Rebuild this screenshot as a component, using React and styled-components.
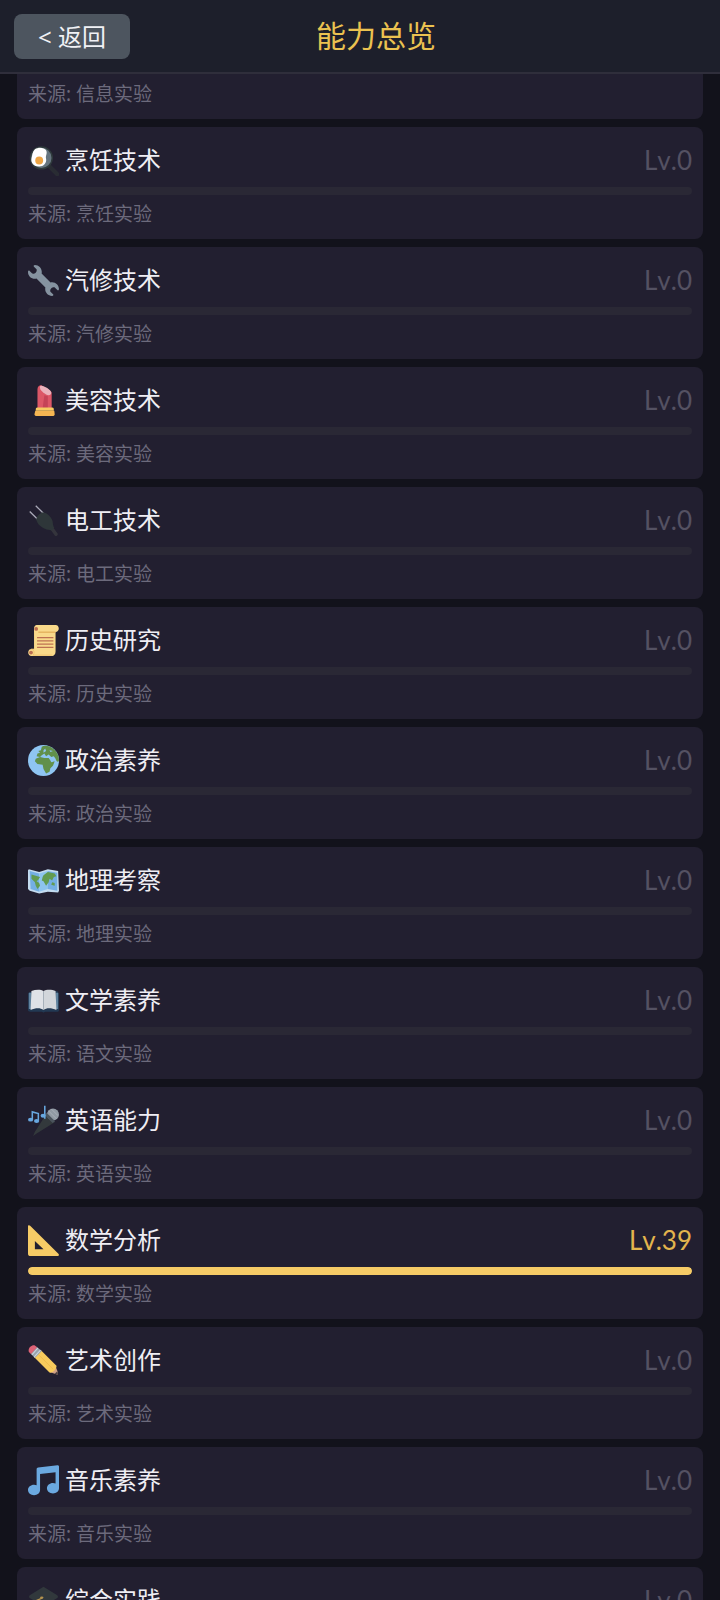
import styled, { createGlobalStyle } from 'styled-components';

const Global = createGlobalStyle`
    * {
        box-sizing:border-box;
    }
    body {
        margin:0;
        background:#12121b;
        font-family:'Noto Sans', 'Noto Sans CJK SC', sans-serif;
    }
`;

const Page = styled.div`
    height:100vh;
    display:flex;
    flex-direction:column;
    overflow:hidden;
`;

const Header = styled.header`
    flex:none;
    display:flex;
    align-items:center;
    padding:14px 98px 13px 14px;
    background:#1d1f2b;
    border-bottom:2px solid #2f2e3b;
`;

const BackBtn = styled.button`
    width:116px;
    height:45px;
    padding:0;
    border:0;
    border-radius:8px;
    background:#4d555f;
    color:#f0f1f5;
    font-family:inherit;
    font-size:24px;
    line-height:45px;
    cursor:pointer;
`;

const Title = styled.h1`
    flex:1;
    margin:0;
    padding-bottom:2px;
    text-align:center;
    font-size:30px;
    font-weight:400;
    line-height:43px;
    color:#ebc250;
`;

const List = styled.ul`
    flex:1;
    min-height:0;
    margin:0;
    padding:0 17px;
    list-style:none;
    display:flex;
    flex-direction:column;
    gap:8px;
    overflow:hidden;
`;

const Card = styled.li`
    flex:none;
    padding:${(props) => (props.$cut ? '7px 11px 12px' : '14px 11px 12px')};
    border-radius:${(props) => (props.$cut ? '0 0 8px 8px' : '8px')};
    background:#221f30;
`;

const Row = styled.div`
    display:flex;
    align-items:center;
    gap:6px;
    height:38px;
    margin-bottom:8px;
`;

const Icon = styled.svg`
    width:31px;
    height:31px;
    flex:none;
`;

const Name = styled.h2`
    flex:1;
    margin:0;
    font-size:24px;
    font-weight:400;
    line-height:38px;
    color:#efeef4;
`;

const Level = styled.span`
    font-family:Lato, sans-serif;
    font-size:26px;
    font-kerning:none;
    line-height:36px;
    color:${(props) => (props.$active ? '#e3b54d' : '#545162')};
`;

const Track = styled.div`
    height:8px;
    margin-bottom:6px;
    border-radius:4px;
    background:#2a2835;
    overflow:hidden;
`;

const Fill = styled.div`
    height:100%;
    border-radius:4px;
    background:#f6cb66;
`;

const Source = styled.p`
    margin:0;
    font-size:19px;
    line-height:26px;
    color:#6c6a7c;
`;

const icons = {
    pan: (
        <>
            <path d="M25 25l9 9" stroke="#292c33" strokeWidth="5" strokeLinecap="round" />
            <circle cx="15.5" cy="15" r="13.5" fill="#2f3a3c" />
            <circle cx="15.5" cy="15" r="11.8" fill="#66757f" />
            <path d="M8 5c4-3 11-2 13 1 2 4-1 6 0 10 1 5-3 9-8 9-6 0-10-4-9-9 1-4 1-8 4-11z" fill="#fff" />
            <circle cx="13" cy="18" r="4.6" fill="#eda545" />
        </>
    ),
    wrench: (
        <path fill="#8593a0" d="M27.989 19.977c-.622 0-1.225.078-1.806.213L15.811 9.818c.134-.581.212-1.184.212-1.806C16.023 3.587 12.436 0 8.012 0 7.11 0 5.91.916 6.909 1.915l2.997 2.997s.999 1.998-.999 3.995-3.996.998-3.996.998L1.915 6.908C.916 5.909 0 7.105 0 8.012c0 4.425 3.587 8.012 8.012 8.012.622 0 1.225-.078 1.806-.212l10.371 10.371c-.135.581-.213 1.184-.213 1.806 0 4.425 3.588 8.011 8.012 8.011.901 0 2.101-.916 1.102-1.915l-2.997-2.997s-.999-1.998.999-3.995 3.995-.999 3.995-.999l2.997 2.997c1 .999 1.916-.197 1.916-1.104 0-4.425-3.588-8.01-8.011-8.01z" />
    ),
    lipstick: (
        <>
            <path d="M11 5c0-4 3-5 5-4.500L25 6c2 1 2.500 2 2.500 4v17H11z" fill="#dc5767" />
            <path d="M19 12l4 1v14h-6z" fill="#c54357" />
            <path d="M14.500 1c3-1 12 4 12.500 8 0 3-3 3.500-6 2-4-2-9-7-6.500-10z" fill="#eab2bc" />
            <path d="M11 26h17c2 0 2 1 2 4H9c0-3 0-4 2-4z" fill="#f7cb63" />
            <path d="M8.500 30h22l.5 4c0 1.500-1 2-2 2H10c-1.500 0-2.500-.5-2.500-2z" fill="#f5b552" />
        </>
    ),
    plug: (
        <>
            <path d="M2 7.500l10 10M9 .8l10 10" stroke="#aaaab8" strokeWidth="1.500" />
            <path d="M26 25l6.500 9" stroke="#34343c" strokeWidth="4" strokeLinecap="round" />
            <path d="M9.500 16.500c1-4 4-7 8-8 5 1 9 5 11 10 .5 3 .5 6 2 8l-3 3c-3-1-5-.5-8-2-5-2-9-6-10-11z" fill="#2e3639" />
        </>
    ),
    scroll: (
        <>
            <path d="M7 8V4c0-5 5-4 5-4h20c5 0 5 8 0 8v23c0 3-2 5-4 5H4c-5 0-5-8 0-8h3z" fill="#f9d98a" />
            <path d="M12 8.300h20" stroke="#dda54f" strokeWidth="1.200" />
            <path d="M7 28h-3c3 1 4 4 2 7h22" stroke="#eebf6c" strokeWidth="1" />
            <circle cx="9.500" cy="4.500" r="2.200" fill="#ba6e51" />
            <circle cx="3.500" cy="32" r="2.200" fill="#ba6e51" />
            <path d="M10.500 14.700h19M10.500 18.500h19M10.500 22.300h19M10.500 26h19" stroke="#bd7152" strokeWidth="1.500" />
        </>
    ),
    globe: (
        <>
            <circle cx="18" cy="18" r="18" fill="#8fc5f2" />
            <path fill="#61904a" d="M16 2c3-2 10-1 14 3 4 3 6 8 6 13-1 3-3 1-4-2l-2-3-3 1-3-3-3 2-2-3-3 2-2 2-4-1 1-3 3-1-2-2 3-1z" />
            <path fill="#61904a" d="M9 16l5-2 5 1 5 0 2 3 1 2 4-1-2 5-3 3-1 4-4 2-3-5-1-5-6-1-3-3z" />
            <path fill="#8fc5f2" d="M18 6l2-2 1 3-3 2zM25 6l4 1-3 1zM26 15l3 4-1 1z" />
        </>
    ),
    map: (
        <>
            <path d="M1 5l12 3 10-3 12 2 1 23-1 2-12-1-10 2-11-3-2-2V6z" fill="#c3dbef" strokeLinejoin="round" />
            <path d="M2 7l11 3v21L3 28z" fill="#74afe3" />
            <path d="M13 10l10-3v21l-10 3z" fill="#8dc4ee" />
            <path d="M23 7l11 2v21l-11-2z" fill="#74afe3" />
            <path fill="#629b50" d="M4 11l7 2 3 1-2 3-2 2 3 2 1 3-3 4-2-4-1-4-4-4zM18 12l5-4 8 2 2 3-3 1-2 4-3-2-1 4-3 4-3-5-2-1 1-4zM28 20l3 1v3l-4-1z" />
        </>
    ),
    book: (
        <>
            <path d="M2 8l32-1 2 3v19c0 2-1 2-3 2H20l-2 1-2-1H3c-2 0-3-1-3-2V10z" fill="#223953" />
            <path d="M1 9h3v19H1zM32 9h3v19h-3z" fill="#60829e" />
            <path d="M4 7c5-2 11-2 14 0v22c-4-3-10-2-15 0z" fill="#dfe2e7" />
            <path d="M18 7c3-2 10-2 14 0l1 22c-5-2-11-3-15 0z" fill="#d2d6db" />
            <path d="M18 7v22" stroke="#a5afb9" strokeWidth=".8" />
        </>
    ),
    mic: (
        <>
            <path d="M21 11l10 9L10 33l-4 3 2-5z" fill="#33393c" />
            <circle cx="29" cy="11" r="7" fill="#919aa4" />
            <path d="M21.500 9l10 10-3 2-9-9z" fill="#4b545d" />
            <path d="M24 7l9 9M27 4.500l8 8" stroke="#b7bdc4" strokeWidth=".7" />
            <path d="M5 17V8l7 2v8M19.500 1v15" stroke="#68a7df" strokeWidth="1.800" fill="none" />
            <ellipse cx="3" cy="17" rx="3" ry="2.300" fill="#68a7df" />
            <ellipse cx="10" cy="18.500" rx="3" ry="2.300" fill="#68a7df" />
            <ellipse cx="17.500" cy="12.500" rx="2.900" ry="2.300" fill="#68a7df" />
        </>
    ),
    ruler: (
        <path fill="#f6cb66" fillRule="evenodd" d="M0 1.500C0 .3 1.500 0 2.500 1L35.300 33.500C36.500 34.800 35.800 36 34 36H3c-2 0-3-1-3-3zM8 18.500v9.700h10z" />
    ),
    pencil: (
        <>
            <path d="M34.500 34.500L24 31l7.500-7.500 3 7.500z" fill="#d3a283" />
            <path d="M35 34.500l-4-1 3-3z" fill="#4b4144" />
            <path d="M7 14l8-8 18 18c1 3-5 9-8 8z" fill="#f7cb5c" />
            <path d="M11 10l18 18" stroke="#eeb94b" strokeWidth="1" />
            <path d="M3 10l7-8 6 5-8 8z" fill="#98a3ae" />
            <path d="M4.500 11.500l7-8M7 14l7.500-8" stroke="#ced6de" strokeWidth="1.200" />
            <path d="M1 8C-.5 4 4-.5 8 .5l2.500 2-7 8z" fill="#dd6276" />
        </>
    ),
    note: (
        <path fill="#6ba9e0" d="M34.209.206L11.791 2.793C10.806 2.907 10 3.811 10 4.803v18.782C9.09 23.214 8.075 23 7 23c-3.865 0-7 2.685-7 6 0 3.314 3.135 6 7 6s7-2.686 7-6V10.539l18-2.077v13.124c-.91-.372-1.925-.586-3-.586-3.865 0-7 2.685-7 6 0 3.314 3.135 6 7 6s7-2.686 7-6V1.803c0-.992-.806-1.71-1.791-1.597z" />
    ),
    cap: (
        <>
            <path d="M6 16h24v12c-4 5-20 5-24 0z" fill="#292f33" />
            <path d="M18 2l16 10c1 1 1 2 0 3L18 25 2 15c-1-1-1-2 0-3z" fill="#31383c" />
            <path d="M17 15L5 20v9" stroke="#b4934f" strokeWidth="1.500" fill="none" />
            <ellipse cx="16" cy="14.500" rx="2" ry="1.200" fill="#b4934f" />
        </>
    ),
};

const abilities = [
    { icon: 'pan', name: '烹饪技术', source: '烹饪实验', level: 0, progress: 0 },
    { icon: 'wrench', name: '汽修技术', source: '汽修实验', level: 0, progress: 0 },
    { icon: 'lipstick', name: '美容技术', source: '美容实验', level: 0, progress: 0 },
    { icon: 'plug', name: '电工技术', source: '电工实验', level: 0, progress: 0 },
    { icon: 'scroll', name: '历史研究', source: '历史实验', level: 0, progress: 0 },
    { icon: 'globe', name: '政治素养', source: '政治实验', level: 0, progress: 0 },
    { icon: 'map', name: '地理考察', source: '地理实验', level: 0, progress: 0 },
    { icon: 'book', name: '文学素养', source: '语文实验', level: 0, progress: 0 },
    { icon: 'mic', name: '英语能力', source: '英语实验', level: 0, progress: 0 },
    { icon: 'ruler', name: '数学分析', source: '数学实验', level: 39, progress: 100 },
    { icon: 'pencil', name: '艺术创作', source: '艺术实验', level: 0, progress: 0 },
    { icon: 'note', name: '音乐素养', source: '音乐实验', level: 0, progress: 0 },
    { icon: 'cap', name: '综合实践', level: 0, progress: 0 },
];

const AbilityCard = ({ icon, name, source, level, progress }) => (
    <Card>
        <Row>
            <Icon viewBox="0 0 36 36" fill="none" aria-hidden="true">{icons[icon]}</Icon>
            <Name>{name}</Name>
            <Level $active={level > 0}>Lv.{level}</Level>
        </Row>
        <Track role="progressbar" aria-label={name} aria-valuenow={progress}>
            <Fill style={{ width: `${progress}%` }} />
        </Track>
        {source && <Source>来源: {source}</Source>}
    </Card>
);

const App = () => (
    <Page>
        <Global />
        <Header>
            <BackBtn type="button">&lt; 返回</BackBtn>
            <Title>能力总览</Title>
        </Header>
        <List>
            {/* scrolled under the header, only its last line shows */}
            <Card $cut>
                <Source>来源: 信息实验</Source>
            </Card>
            {abilities.map((v) => (
                <AbilityCard key={v.name} {...v} />
            ))}
        </List>
    </Page>
);

export default App;
